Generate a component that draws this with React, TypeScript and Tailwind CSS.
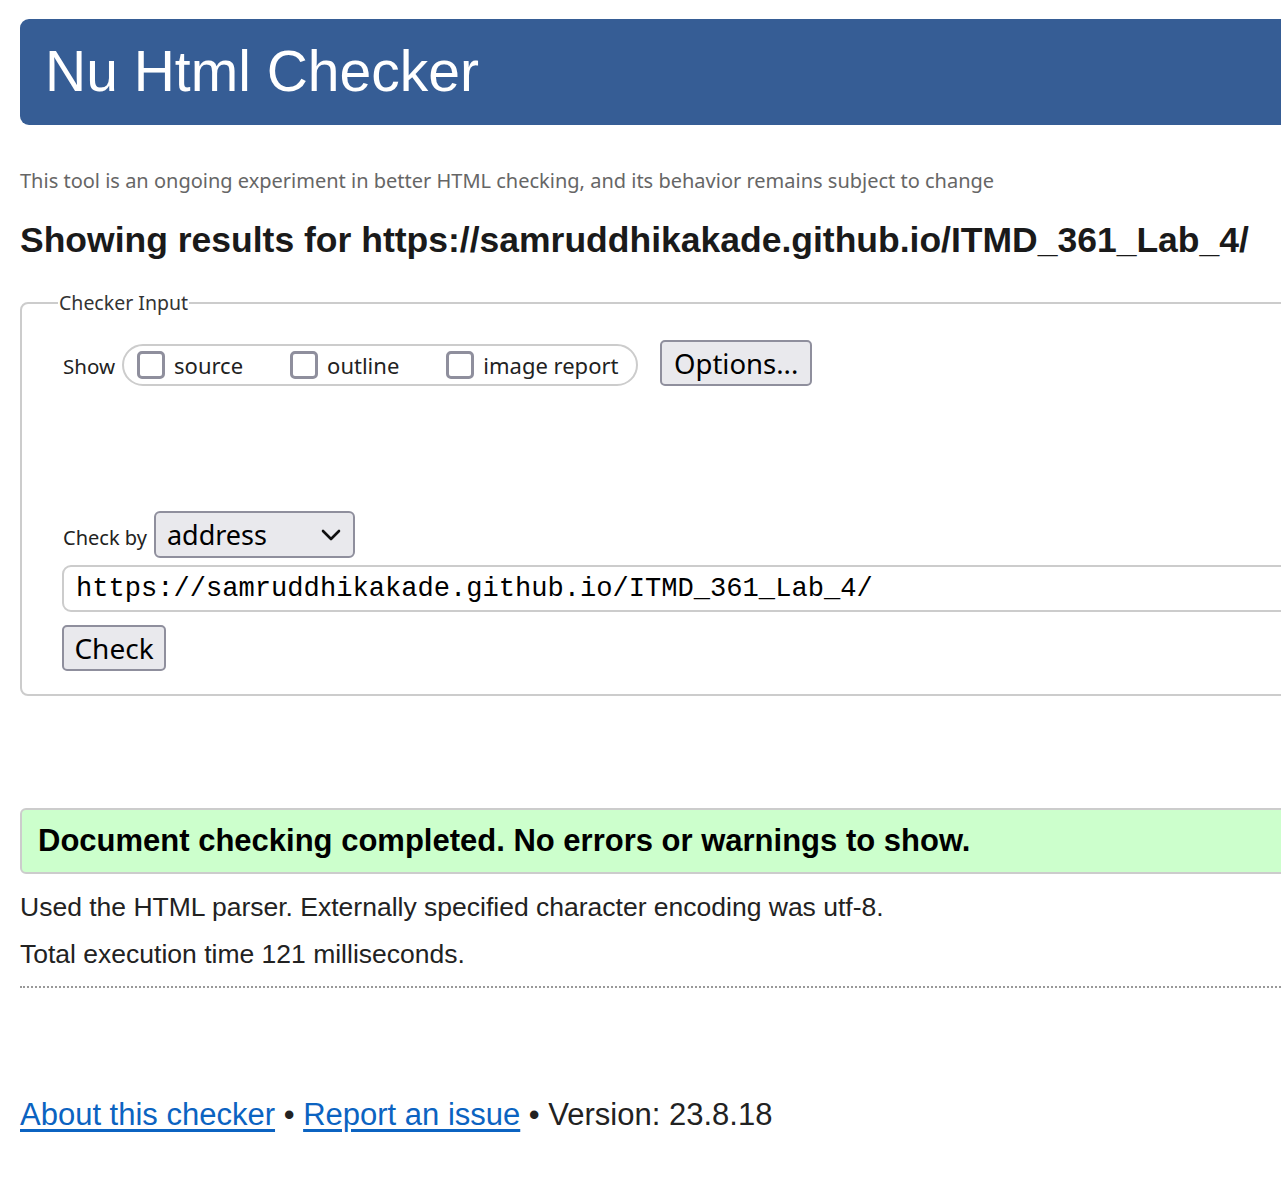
/* eslint-disable */
import React from 'react';

const arial = "font-['Liberation_Sans',Arial,sans-serif]";
const ui = "font-['Noto_Sans','Open_Sans',sans-serif]";

function Box({ label }: { label: string }) {
  return (
    <label className="flex items-center gap-[9px]">
      <span className="w-[28px] h-[28px] rounded-[5px] border-[3px] border-[#8f8f9d] bg-white" />
      <span className="text-[22px] text-[#222]">{label}</span>
    </label>
  );
}

export default function App() {
  return (
    <div className="w-full overflow-hidden bg-white min-h-[1186px]">
      <div className="w-[1340px] pl-[20px] pt-[19px]">
        <header className="h-[106px] bg-[#365d95] rounded-[9px] flex items-center pl-[25px]">
          <h1 className={`${arial} text-white text-[57px] leading-none pb-[2px]`}>Nu Html Checker</h1>
        </header>

        <p className={`${ui} mt-[44px] text-[20px] text-[#666] leading-[24px]`}>
          This tool is an ongoing experiment in better HTML checking, and its behavior remains subject to change
        </p>

        <h2 className={`${arial} mt-[26px] font-bold text-[35.5px] leading-[42px] text-[#1a1a1a]`}>
          Showing results for https://samruddhikakade.github.io/ITMD_361_Lab_4/
        </h2>

        <fieldset className={`${ui} mt-[27px] border-2 border-[#ccc] rounded-[8px] pl-[41px] pr-4 pt-[27px] pb-[23px]`}>
          <legend className="ml-[-5px] px-[1px] text-[19.5px] text-[#333]">Checker Input</legend>

          <div className="flex items-start">
            <span className="text-[20.5px] text-[#222] mr-[7px] mt-[7px]">Show</span>
            <div className="h-[42px] w-[516px] rounded-full border-2 border-[#ccc] flex items-center pl-[13px] gap-[47px]">
              <Box label="source" />
              <Box label="outline" />
              <Box label="image report" />
            </div>
            <button className="ml-[22px] mt-[-4px] h-[46px] px-[12px] bg-[#e9e9ed] border-2 border-[#8f8f9d] rounded-[5px] text-[27.5px] text-black leading-none">
              Options...
            </button>
          </div>

          <div className="mt-[125px] flex items-center">
            <span className="text-[20px] text-[#222] mr-[7px] mt-[6px]">Check by</span>
            <div className="h-[47px] w-[201px] bg-[#e9e9ed] border-2 border-[#8f8f9d] rounded-[6px] flex items-center justify-between pl-[11px] pr-[12px]">
              <span className="text-[27px] text-black leading-none">address</span>
              <svg width="20" height="12" viewBox="0 0 20 12" fill="none">
                <path d="M2 2l8 8 8-8" stroke="#111" strokeWidth="2.6" strokeLinecap="round" strokeLinejoin="round" />
              </svg>
            </div>
          </div>

          <div className="mt-[7px] ml-[-1px] h-[47px] border-2 border-[#ccc] rounded-[9px] flex items-center pl-[12px]">
            <span className="font-['Liberation_Mono','DejaVu_Sans_Mono',monospace] text-[27.1px] text-black leading-none">
              https://samruddhikakade.github.io/ITMD_361_Lab_4/
            </span>
          </div>

          <button className="mt-[13px] ml-[-1px] h-[46px] w-[104px] bg-[#e9e9ed] border-2 border-[#8f8f9d] rounded-[5px] text-[28px] text-black leading-none">
            Check
          </button>
        </fieldset>

        <div className="mt-[112px] h-[66px] bg-[#ccffcc] border-2 border-[#ccc] rounded-[6px] flex items-center pl-[16px]">
          <p className={`${arial} font-bold text-[31px] text-black`}>
            Document checking completed. No errors or warnings to show.
          </p>
        </div>

        <div className={`${arial} text-[26.5px] text-[#222]`}>
          <p className="mt-[18px] leading-[30px]">Used the HTML parser. Externally specified character encoding was utf-8.</p>
          <p className="mt-[17px] leading-[30px]">Total execution time 121 milliseconds.</p>
        </div>

        <hr className="mt-[17px] border-0 border-t-2 border-dotted border-[#999]" />

        <footer className={`${arial} mt-[109px] text-[31px] text-[#222] leading-[36px]`}>
          <a href="#" className="text-[#0b63c1] underline underline-offset-[4px]">About this checker</a>
          {' • '}
          <a href="#" className="text-[#0b63c1] underline underline-offset-[4px]">Report an issue</a>
          {' • Version: 23.8.18'}
        </footer>
      </div>
    </div>
  );
}
